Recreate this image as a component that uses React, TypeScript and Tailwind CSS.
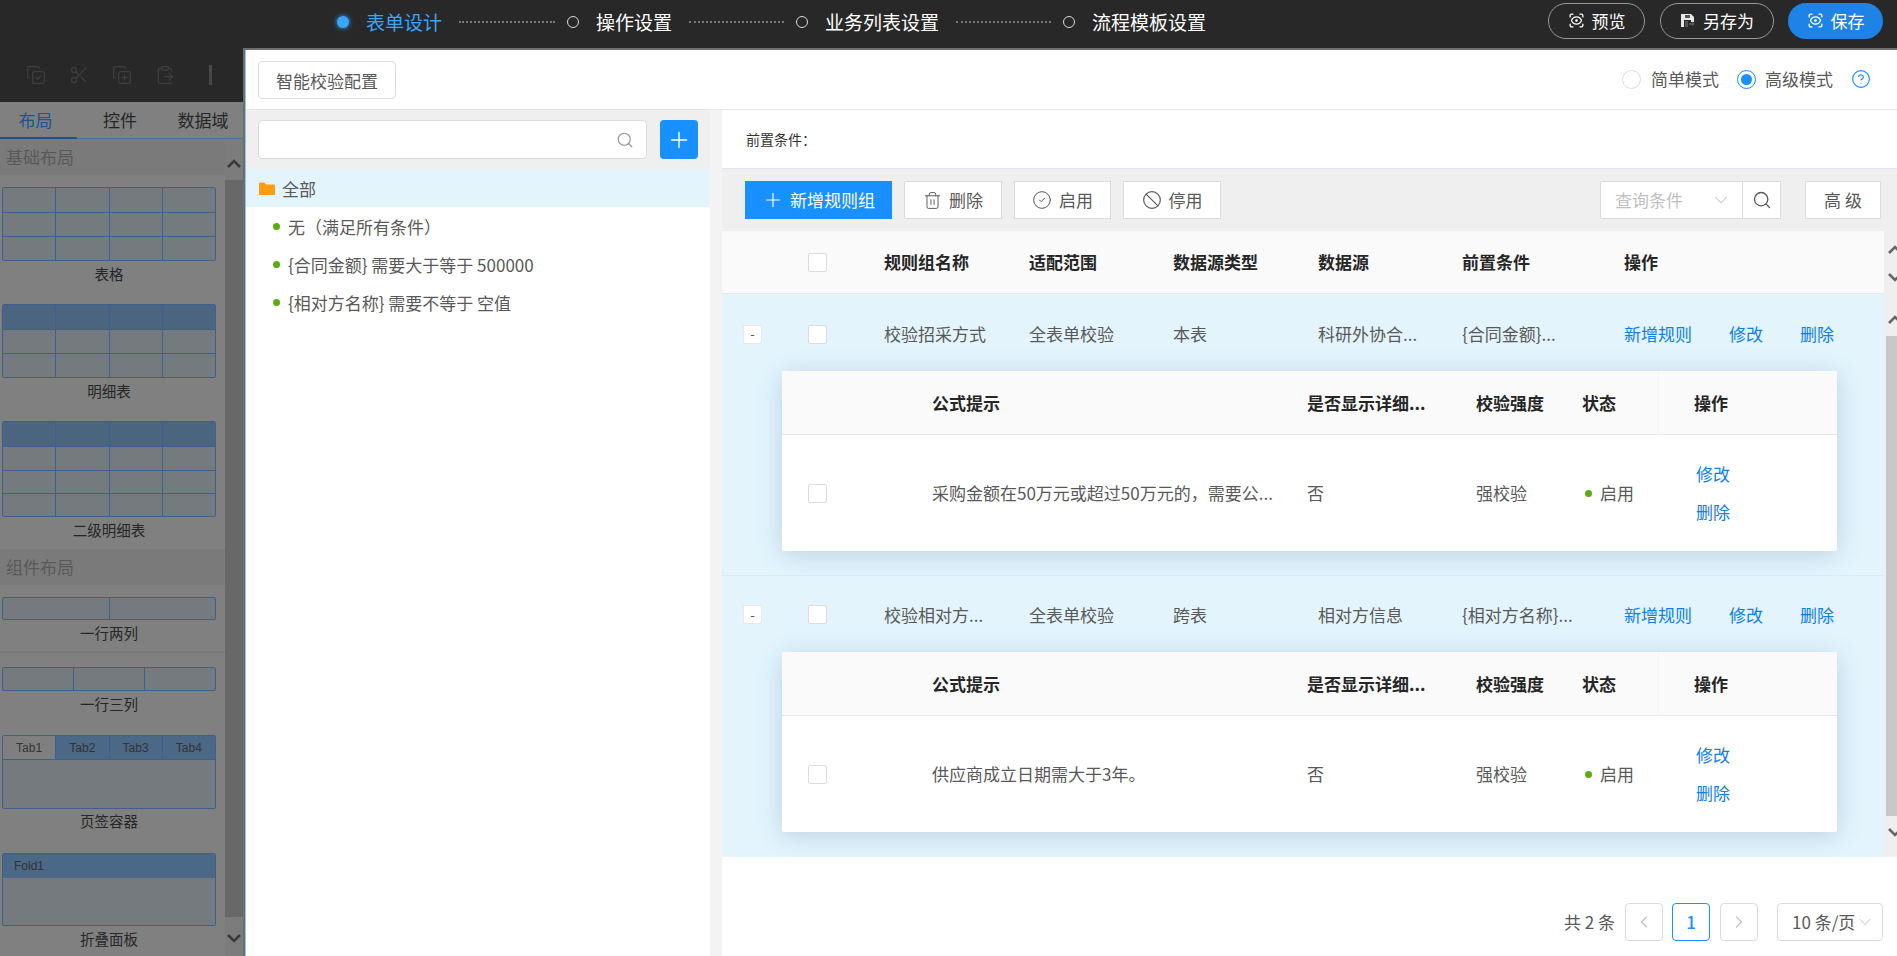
import React from 'react';
import {
  ChevronDown,
  ChevronLeft,
  ChevronRight,
  CircleCheck,
  ClipboardPaste,
  Ban,
  CopyCheck,
  CopyPlus,
  HelpCircle,
  Plus,
  Scissors,
  ScanEye,
  Search,
  Trash2,
} from 'lucide-react';

const font = "font-['Noto_Sans_CJK_SC','Roboto',sans-serif]";

function Chev({ down, className = '' }: { down?: boolean; className?: string }) {
  return (
    <svg width="14" height="10" viewBox="0 0 14 10" fill="none" stroke="currentColor" strokeWidth="2.6" className={`shrink-0 ${className}`}>
      <path d={down ? 'M1 2l6 6 6-6' : 'M1 8l6-6 6 6'} />
    </svg>
  );
}

function Label({ text, className = '' }: { text: string; className?: string }) {
  return <div className={`w-[214px] ml-[2px] h-[19px] leading-[19px] text-center text-[14.5px] text-[#262626] ${className}`}>{text}</div>;
}

function Thumb({ rows, head = false, cols = 4, label, h }: { rows: number[]; head?: boolean; cols?: number; label: string; h: string }) {
  return (
    <div>
      <div className={`w-[214px] ml-[2px] flex flex-col border border-[#3f5f90] rounded-[2px] overflow-hidden bg-[#747a7d] ${h}`}>
        {rows.map((r, i) => (
          <div key={i} className={`flex border-t border-[#3f5f90] first:border-t-0 ${head && i === 0 ? 'bg-[#4b6580]' : ''}`} style={{ height: r }}>
            {Array.from({ length: cols }).map((_, j) => (
              <div key={j} className="flex-1 border-l border-[#3f5f90] first:border-l-0" />
            ))}
          </div>
        ))}
      </div>
      <Label text={label} className="mt-[3px]" />
    </div>
  );
}

function LeftPanel() {
  return (
    <aside className="w-[243px] shrink-0 flex flex-col bg-[#808080]">
      <div className="h-[54px] bg-[#282828] flex items-center text-[#3f3f3f]">
        <CopyCheck size={20} strokeWidth={1.5} className="ml-[26px]" />
        <Scissors size={20} strokeWidth={1.5} className="ml-[23px]" />
        <CopyPlus size={20} strokeWidth={1.5} className="ml-[23px]" />
        <ClipboardPaste size={20} strokeWidth={1.5} className="ml-[23px]" />
        <div className="ml-[34px] w-[3px] h-[20px] bg-[#484848]" />
      </div>
      <div className="h-[37px] flex border-b border-[#4f6f96] text-[17px] text-[#262626]">
        <div className="w-[77px] h-[37px] pr-[6px] flex items-center justify-center text-[#1d5291] border-b-[2px] border-[#1d5291]">布局</div>
        <div className="w-[86px] flex items-center justify-center">控件</div>
        <div className="flex-1 flex items-center justify-center">数据域</div>
      </div>
      <div className="flex-1 flex min-h-0">
        <div className="w-[225px]">
          <div className="h-[36px] pl-[6px] leading-[36px] text-[17px] text-[#595959] bg-[#7a7a7a]">基础布局</div>
          <div className="pt-[12px] flex flex-col gap-[21px]">
            <Thumb h="h-[74px]" rows={[24, 25, 24]} label="表格" />
            <Thumb h="h-[74px]" head rows={[24, 25, 24]} label="明细表" />
            <Thumb h="h-[96px]" head rows={[24, 25, 23, 23]} label="二级明细表" />
          </div>
          <div className="mt-[10px] h-[36px] pl-[6px] leading-[36px] text-[17px] text-[#595959] bg-[#7a7a7a]">组件布局</div>
          <div className="pt-[12px]">
            <Thumb h="h-[23px]" cols={2} rows={[21]} label="一行两列" />
            <div className="h-[12px] border-b-[3px] border-[#7a7a7a] mb-[13px]" />
            <Thumb h="h-[24px]" cols={3} rows={[22]} label="一行三列" />
            <div className="h-[22px]" />
            <div>
              <div className="w-[214px] ml-[2px] h-[74px] border border-[#3f5f90] rounded-[2px] overflow-hidden bg-[#747a7d]">
                <div className="h-[24px] flex border-b border-[#3f5f90] bg-[#4b6887] text-[12px] leading-[25px] text-[#333] text-center font-['Liberation_Sans',sans-serif]">
                  <div className="flex-1 bg-[#7f7f7f]">Tab1</div>
                  <div className="flex-1 border-l border-[#3f5f90]">Tab2</div>
                  <div className="flex-1 border-l border-[#3f5f90]">Tab3</div>
                  <div className="flex-1 border-l border-[#3f5f90]">Tab4</div>
                </div>
              </div>
              <Label text="页签容器" className="mt-[2px]" />
            </div>
            <div className="h-[23px]" />
            <div>
              <div className="w-[214px] ml-[2px] h-[73px] border border-[#3f5f90] rounded-[2px] overflow-hidden bg-[#747a7d]">
                <div className="h-[24px] pl-[11px] bg-[#4b6887] text-[12px] leading-[25px] text-[#333] font-['Liberation_Sans',sans-serif]">Fold1</div>
              </div>
              <Label text="折叠面板" className="mt-[3px]" />
            </div>
          </div>
        </div>
        <div className="w-[18px] flex flex-col bg-[#7c7c7c] text-[#3a3a3a]">
          <div className="h-[41px] pl-[2px] pt-[20px]"><Chev className="block" /></div>
          <div className="h-[737px] bg-[#686868]" />
          <div className="pl-[2px] pt-[16px]"><Chev down className="block" /></div>
        </div>
      </div>
    </aside>
  );
}

function Step({ active, label, line, w }: { active?: boolean; label: string; line?: boolean; w?: string }) {
  return (
    <div className="flex items-center">
      {active ? (
        <span className="w-[12px] h-[12px] rounded-full bg-[#36a6ff] shadow-[0_0_5px_#36a6ff]" />
      ) : (
        <span className="w-[12px] h-[12px] rounded-full border-[1.5px] border-[#d9d9d9]" />
      )}
      <span className={`ml-[17px] text-[19px] ${active ? 'text-[#36a6ff]' : 'text-white'}`}>{label}</span>
      {line && <span className={`ml-[17px] mr-[12px] border-t-2 border-dotted border-[#777] ${w}`} />}
    </div>
  );
}

function TopBtn({ label, primary, save, w }: { label: string; primary?: boolean; save?: boolean; w: string }) {
  return (
    <button className={`h-[36px] rounded-[18px] flex items-center justify-center gap-[7px] text-[17px] text-white ${w} ${primary ? 'bg-[#1e82e6]' : 'border border-[#999]'}`}>
      {save ? (
        <svg width="16" height="16" viewBox="0 0 16 16" fill="#e8e8e8">
          <path d="M1 1h10l3 3v5h-3V7H4v7H1z" />
          <path d="M5 2h5v3H5zM9 10h3V8.500l3 2.500-3 2.500V12H9zM5 8h3v6H5z" fill="#555" />
        </svg>
      ) : (
        <ScanEye size={17} strokeWidth={1.8} />
      )}
      {label}
    </button>
  );
}

function Box({ className = '' }: { className?: string }) {
  return <span className={`block w-[19px] h-[19px] bg-white border border-[#dcdcdc] rounded-[2px] ${className}`} />;
}

function TreePanel() {
  const items = ['无（满足所有条件）', '{合同金额} 需要大于等于 500000', '{相对方名称} 需要不等于 空值'];
  return (
    <div className="w-[464px] shrink-0 flex flex-col bg-white">
      <div className="h-[59px] bg-[#efefef] flex items-center pl-[12px]">
        <div className="w-[389px] h-[39px] bg-white border border-[#dcdcdc] rounded-[4px] flex items-center justify-end pr-[12px] text-[#9a9a9a]">
          <Search size={18} strokeWidth={1.6} />
        </div>
        <button className="ml-[13px] w-[38px] h-[39px] rounded-[4px] bg-[#1890ff] flex items-center justify-center text-white">
          <Plus size={26} strokeWidth={1.3} />
        </button>
      </div>
      <div className="h-[38px] bg-[#e3f4fd] flex items-center pl-[13px] pt-[1px] text-[17px] text-[#595959]">
        <svg width="16" height="13" viewBox="0 0 16 13" fill="#fa9d0f">
          <path d="M0 1.500a1 1 0 0 1 1-1h4.500l1.500 2h8a1 1 0 0 1 1 1v8.500a1 1 0 0 1-1 1H1a1 1 0 0 1-1-1z" />
        </svg>
        <span className="ml-[7px]">全部</span>
      </div>
      {items.map(t => (
        <div key={t} className="h-[38px] flex items-center pl-[27px] pt-[1px] text-[17px] text-[#595959]">
          <span className="w-[7px] h-[7px] rounded-full bg-[#5cad0c]" />
          <span className="ml-[8px]">{t}</span>
        </div>
      ))}
    </div>
  );
}

function ToolBtn({ icon, label, w = 'w-[98px]' }: { icon: React.ReactNode; label: string; w?: string }) {
  return (
    <button className={`h-[38px] bg-white border border-[#dcdcdc] flex items-center justify-center gap-[7px] text-[17px] text-[#595959] ${w}`}>
      {icon}
      {label}
    </button>
  );
}

const mainCols = 'grid grid-cols-[86px_76px_145px_144px_145px_144px_162px_105px_71px_1fr] items-center';
const subCols = 'grid grid-cols-[150px_375px_169px_106px_76px_1fr] items-center';

function SubTable({ text }: { text: string }) {
  return (
    <div className="ml-[60px] w-[1055px] rounded-[2px] bg-white shadow-[0_4px_26px_rgba(40,80,110,0.2)]">
      <div className={`${subCols} h-[64px] bg-[#fafafa] border-b border-[#e8e8e8] text-[17px] font-bold text-[#262626]`}>
        <span />
        <span>公式提示</span>
        <span>是否显示详细...</span>
        <span>校验强度</span>
        <span>状态</span>
        <span className="h-full border-l border-[#f5f5f5] pl-[35px] flex items-center">操作</span>
      </div>
      <div className="relative">
        <div className={`${subCols} h-[116px] text-[17px] text-[#595959]`}>
          <span className="pl-[26px]"><Box /></span>
          <span>{text}</span>
          <span>否</span>
          <span>强校验</span>
          <span className="flex items-center">
            <span className="ml-[3px] w-[7px] h-[7px] rounded-full bg-[#5cad0c]" />
            <span className="ml-[8px]">启用</span>
          </span>
          <span className="h-full" />
        </div>
        <div className="absolute left-[914px] top-0 h-full flex flex-col justify-center gap-[18px] text-[17px] leading-[20px] text-[#0d80ee]">
          <span>修改</span>
          <span>删除</span>
        </div>
      </div>
    </div>
  );
}

function GroupRow({ cells, text, last }: { cells: string[]; text: string; last?: boolean }) {
  return (
    <div className={`overflow-hidden bg-[#e3f4fd] ${last ? 'h-[281px]' : 'h-[282px] border-b border-[#dfe9ef]'}`}>
      <div className={`${mainCols} ${last ? 'h-[76px] pt-[1px]' : 'h-[77px] pt-[3px]'} text-[17px] text-[#595959]`}>
        <span className="pl-[21px]">
          <span className="flex w-[19px] h-[19px] items-center justify-center bg-white border border-[#e8e8e8] rounded-[2px] text-[13px] text-[#555]">-</span>
        </span>
        <span><Box /></span>
        {cells.map(c => <span key={c}>{c}</span>)}
        <span className="text-[#0d80ee]">新增规则</span>
        <span className="text-[#0d80ee]">修改</span>
        <span className="text-[#0d80ee]">删除</span>
      </div>
      <SubTable text={text} />
    </div>
  );
}

function TablePanel() {
  return (
    <div className="flex-1 min-w-0 flex flex-col bg-white">
      <div className="h-[59px] flex items-center pl-[24px] text-[14px] text-[#333] border-b border-[#dfe3ea]">前置条件：</div>
      <div className="h-[62px] bg-[#efefef] flex items-center pl-[23px] pr-[16px]">
        <button className="w-[147px] h-[38px] bg-[#1890ff] flex items-center justify-center gap-[6px] text-[17px] text-white">
          <Plus size={22} strokeWidth={1.3} />
          新增规则组
        </button>
        <div className="ml-[12px] flex gap-[12px]">
          <ToolBtn icon={<Trash2 size={19} strokeWidth={1.2} />} label="删除" />
          <ToolBtn icon={<CircleCheck size={20} strokeWidth={1.2} />} label="启用" w="w-[97px]" />
          <ToolBtn icon={<Ban size={20} strokeWidth={1.4} />} label="停用" />
        </div>
        <div className="ml-auto flex items-center">
          <div className="w-[143px] h-[38px] bg-white border border-[#dcdcdc] flex items-center justify-between pl-[14px] pr-[10px] text-[17px] text-[#bfbfbf]">
            查询条件
            <ChevronDown size={22} strokeWidth={1.1} />
          </div>
          <button className="w-[38px] h-[38px] bg-white border border-l-0 border-[#dcdcdc] flex items-center justify-center text-[#595959]">
            <Search size={20} strokeWidth={1.6} />
          </button>
          <button className="ml-[24px] w-[76px] h-[38px] bg-white border border-[#dcdcdc] text-[17px] text-[#595959]">高 级</button>
        </div>
      </div>
      <div className="flex">
        <div className="flex-1 min-w-0">
          <div className={`${mainCols} h-[63px] bg-[#fafafa] border-b border-[#e8e8e8] text-[17px] font-bold text-[#262626]`}>
            <span />
            <span><Box /></span>
            <span>规则组名称</span>
            <span>适配范围</span>
            <span>数据源类型</span>
            <span>数据源</span>
            <span>前置条件</span>
            <span>操作</span>
          </div>
          <GroupRow
            cells={['校验招采方式', '全表单校验', '本表', '科研外协合...', '{合同金额}...']}
            text="采购金额在50万元或超过50万元的，需要公..."
          />
          <GroupRow
            last
            cells={['校验相对方...', '全表单校验', '跨表', '相对方信息', '{相对方名称}...']}
            text="供应商成立日期需大于3年。"
          />
        </div>
        <div className="w-[13px] shrink-0 bg-[#efefef] flex flex-col text-[#666] overflow-hidden">
          <div className="h-[105px] pl-[4px] pt-[14px] flex flex-col">
            <Chev />
            <Chev down className="mt-[17px]" />
            <Chev className="mt-[33px]" />
          </div>
          <div className="ml-[2px] h-[480px] bg-[#c8c8c8]" />
          <div className="flex-1 pl-[4px] pt-[11px]"><Chev down /></div>
        </div>
      </div>
      <div className="flex-1 flex items-start justify-end pt-[46px] pr-[14px] text-[17px] text-[#595959]">
        <span className="h-[38px] leading-[38px] mr-[10px]">共 2 条</span>
        <span className="w-[38px] h-[38px] border border-[#dcdcdc] rounded-[4px] flex items-center justify-center text-[#bfbfbf]"><ChevronLeft size={20} strokeWidth={1.4} /></span>
        <span className="ml-[9px] w-[38px] h-[38px] border border-[#1890ff] rounded-[4px] flex items-center justify-center text-[#1890ff] font-medium">1</span>
        <span className="ml-[10px] w-[38px] h-[38px] border border-[#dcdcdc] rounded-[4px] flex items-center justify-center text-[#bfbfbf]"><ChevronRight size={20} strokeWidth={1.4} /></span>
        <span className="ml-[19px] w-[106px] h-[38px] border border-[#dcdcdc] rounded-[4px] flex items-center pl-[14px] whitespace-nowrap">
          10 条/页
          <ChevronDown size={20} strokeWidth={1.2} className="text-[#bfbfbf] shrink-0" />
        </span>
      </div>
    </div>
  );
}

export default function App() {
  return (
    <div className={`w-[1897px] h-[956px] overflow-hidden flex flex-col bg-[#282828] ${font}`}>
      <header className="h-[48px] shrink-0 flex items-center pl-[337px] pr-[14px]">
        <div className="flex items-center pb-[4px]">
          <Step active label="表单设计" line w="w-[96px]" />
          <Step label="操作设置" line w="w-[95px]" />
          <Step label="业务列表设置" line w="w-[95px]" />
          <Step label="流程模板设置" />
        </div>
        <div className="ml-auto flex gap-[14px] mb-[7px]">
          <TopBtn label="预览" w="w-[97px]" />
          <TopBtn save label="另存为" w="w-[114px] ml-[1px]" />
          <TopBtn primary label="保存" w="w-[95px]" />
        </div>
      </header>
      <div className="flex-1 min-h-0 flex">
        <LeftPanel />
        <main className="flex-1 min-w-0 flex flex-col bg-white border-t-2 border-l-2 border-[#6e6e6e]">
          <div className="flex-1 min-h-0 flex flex-col border-l border-[#8cc6ea]">
            <div className="h-[60px] shrink-0 border-b border-[#e8e8e8] flex items-center pl-[12px] pr-[26px]">
              <button className="w-[138px] h-[38px] pt-[3px] border border-[#dcdcdc] rounded-[4px] text-[17px] text-[#595959]">智能校验配置</button>
              <div className="ml-auto flex items-center pb-[1px] text-[17px] text-[#595959]">
                <span className="w-[19px] h-[19px] rounded-full border border-[#dcdcdc]" />
                <span className="ml-[10px]">简单模式</span>
                <span className="ml-[18px] w-[19px] h-[19px] rounded-full border border-[#1890ff] flex items-center justify-center">
                  <span className="w-[11px] h-[11px] rounded-full bg-[#1890ff]" />
                </span>
                <span className="ml-[9px]">高级模式</span>
                <HelpCircle size={20} strokeWidth={1.4} className="ml-[18px] text-[#1890ff]" />
              </div>
            </div>
            <div className="flex-1 min-h-0 flex">
              <TreePanel />
              <div className="w-[12px] shrink-0 bg-[#f3f3f3]" />
              <TablePanel />
            </div>
          </div>
        </main>
      </div>
    </div>
  );
}
